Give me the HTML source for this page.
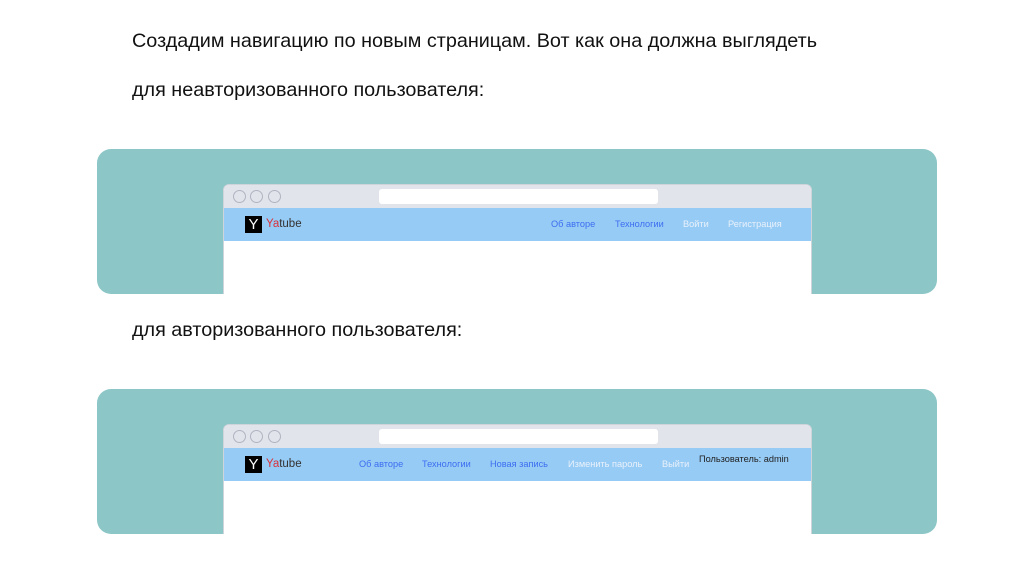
<!DOCTYPE html>
<html><head><meta charset="utf-8"><style>
*{margin:0;padding:0;box-sizing:border-box}
body{width:1024px;height:561px;background:#fff;position:relative;overflow:hidden;font-family:"Liberation Sans",sans-serif}
.t{position:absolute;left:132px;font-size:19.8px;color:#111;white-space:nowrap}
.teal{position:absolute;left:97px;width:840px;height:145px;background:#8cc6c6;border-radius:14px}
.win{position:absolute;left:223px;width:589px;background:#fff;border:1.5px solid #cfd3da;border-bottom:none;border-radius:6px 6px 0 0;overflow:hidden}
.bar{height:23px;background:#e1e4eb;position:relative}
.c{position:absolute;top:5px;width:13px;height:13px;border:1.5px solid #b0b4c0;border-radius:50%}
.addr{position:absolute;left:155px;top:4px;width:279px;height:15px;background:#fff;border-radius:3px}
.nav{height:33px;background:#96cbf5;position:relative;font-size:9.2px}
.logo{position:absolute;left:21px;top:8px;width:17px;height:17px;background:#000;color:#fff;font-size:15px;text-align:center;line-height:17px}
.yt{position:absolute;left:42px;top:10px;font-size:11.5px;color:#333}
.yt b{font-weight:normal;color:#d8313b}
.n{position:absolute;top:11px;white-space:nowrap}
.bl{color:#3c6ef0}.wh{color:#e9f1fb}
</style></head><body>
<div class="t" style="top:30px">Создадим навигацию по новым страницам. Вот как она должна выглядеть</div>
<div class="t" style="top:79px">для неавторизованного пользователя:</div>
<div class="t" style="top:319px">для авторизованного пользователя:</div>

<div class="teal" style="top:149px"></div>
<div class="win" style="top:184px;height:110px">
<div class="bar"><div class="c" style="left:9px"></div><div class="c" style="left:26px"></div><div class="c" style="left:44px"></div><div class="addr"></div></div>
<div class="nav"><div class="logo">Y</div><div class="yt"><b>Ya</b>tube</div>
<span class="n bl" style="left:327px">Об авторе</span><span class="n bl" style="left:391px">Технологии</span><span class="n wh" style="left:459px">Войти</span><span class="n wh" style="left:504px">Регистрация</span></div>
</div>

<div class="teal" style="top:389px"></div>
<div class="win" style="top:424px;height:110px">
<div class="bar"><div class="c" style="left:9px"></div><div class="c" style="left:26px"></div><div class="c" style="left:44px"></div><div class="addr"></div></div>
<div class="nav"><div class="logo">Y</div><div class="yt"><b>Ya</b>tube</div>
<span class="n bl" style="left:135px">Об авторе</span><span class="n bl" style="left:198px">Технологии</span><span class="n bl" style="left:266px">Новая запись</span><span class="n wh" style="left:344px">Изменить пароль</span><span class="n wh" style="left:438px">Выйти</span><span class="n" style="left:475px;top:6px;color:#222">Пользователь: admin</span></div>
</div>
</body></html>
